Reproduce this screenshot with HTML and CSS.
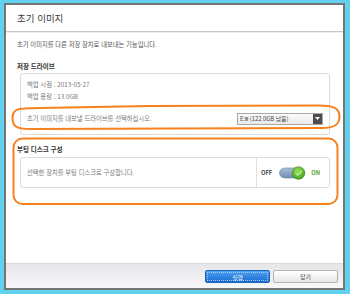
FILE: index.html
```html
<!DOCTYPE html>
<html lang="ko">
<head>
<meta charset="utf-8">
<link rel="stylesheet" href="styles.css">
</head>
<body>
<div class="dialog">
  <div class="header">초기 이미지</div>
  <div class="content">
    <p class="intro">초기 이미지를 다른 저장 장치로 내보내는 기능입니다.</p>
    <h2 class="heading">저장 드라이브</h2>
    <div class="box box-drive">
      <div class="info">백업 시점 : 2013-05-27</div>
      <div class="info">백업 용량 : 13.0GB</div>
      <div class="select-row">
        <span class="info">초기 이미지를 내보낼 드라이브를 선택하십시오.</span>
        <div class="select">
          <span class="select-text">E:₩ (122.0GB 남음)</span>
          <span class="select-arrow"><svg width="5" height="3" viewBox="0 0 5 3"><path d="M0 0H5L2.5 3Z" fill="#fff"/></svg></span>
        </div>
      </div>
    </div>
    <h2 class="heading heading-boot">부팅 디스크 구성</h2>
    <div class="box box-boot">
      <div class="boot-text info">선택한 장치를 부팅 디스크로 구성합니다.</div>
      <div class="boot-toggle">
        <span class="off">OFF</span>
        <svg class="toggle" width="27" height="14" viewBox="0 0 27 14">
          <defs>
            <linearGradient id="trk" x1="0" y1="0" x2="0" y2="1">
              <stop offset="0" stop-color="#a6c0d6"/>
              <stop offset="1" stop-color="#6d8fae"/>
            </linearGradient>
            <radialGradient id="knb" cx="0.45" cy="0.35" r="0.7">
              <stop offset="0" stop-color="#9be05e"/>
              <stop offset="1" stop-color="#3f9e1a"/>
            </radialGradient>
          </defs>
          <rect x="0.5" y="2" width="25" height="10" rx="5" fill="url(#trk)" stroke="#6a88a3" stroke-width="0.6"/>
          <circle cx="19.5" cy="7" r="6.3" fill="url(#knb)" stroke="#3a8a1a" stroke-width="0.6"/>
          <path d="M16.6 7.2L18.8 9.2L22.5 5.2" fill="none" stroke="#c9f0a6" stroke-width="1.1" stroke-linecap="round" stroke-linejoin="round"/>
        </svg>
        <span class="on">ON</span>
      </div>
    </div>
  </div>
  <div class="footer">
    <button class="btn btn-primary"><span class="focus">실행</span></button>
    <button class="btn btn-close">닫기</button>
  </div>
</div>
<svg class="annotations" width="350" height="294" viewBox="0 0 350 294">
  <path d="M24 108.5 C15 108.5 12.5 112 12.5 118 C12.5 126 16 129 30 129 L322 128 C334 128 339.5 125 339.5 117 C339.5 108 334 105.5 318 105.5 L150 106 L40 108 Z" fill="none" stroke="#f7801f" stroke-width="2"/>
  <rect x="13.5" y="138.5" width="324" height="65.5" rx="9" fill="none" stroke="#f7801f" stroke-width="2"/>
</svg>
</body>
</html>
```
FILE: styles.css
```css
* { box-sizing: border-box; }
html, body { margin: 0; }
body {
  width: 350px;
  height: 294px;
  background: #62d1ee;
  padding: 3px 5px 4px 4px;
  position: relative;
  font-family: "Noto Sans CJK KR", "Noto Sans", sans-serif;
  overflow: hidden;
}
.dialog {
  width: 341px;
  height: 287px;
  border: 2px solid #727676;
  border-top-width: 2px;
  background: #fff;
  display: flex;
  flex-direction: column;
}
.header {
  height: 27px;
  padding-left: 11px;
  display: flex;
  align-items: center;
  font-size: 9.5px;
  color: #3a3a3a;
  border-bottom: 1px solid #c8c8c8;
  box-shadow: 0 1px 0 #eee;
}
.content {
  padding: 8px 13px 0 11px;
  display: flex;
  flex-direction: column;
}
.intro {
  margin: 0;
  font-size: 6.3px;
  line-height: 10px;
  height: 10px;
  color: #555;
}
.heading {
  margin: 11px 0 0;
  font-size: 6.5px;
  line-height: 10px;
  height: 10px;
  font-weight: bold;
  color: #333;
}
.heading-boot { margin-top: 9px; }
.box {
  margin-left: 3px;
  border: 1px solid #dcdcdc;
  border-radius: 3px;
  background: #fff;
}
.box-drive {
  margin-top: 2px;
  padding: 6px 6px 9px 6px;
  display: flex;
  flex-direction: column;
  gap: 2px;
}
.info {
  font-size: 6.3px;
  line-height: 10px;
  color: #7a7a7a;
}
.select-row {
  margin-top: 8px;
  display: flex;
  align-items: center;
  justify-content: space-between;
  height: 13px;
}
.select {
  width: 86px;
  height: 12px;
  border: 1px solid #a9a9a9;
  background: linear-gradient(#fbfbfb, #e9e9e9);
  display: flex;
  align-items: stretch;
}
.select-text {
  flex: 1;
  font-size: 5.8px;
  line-height: 10px;
  padding-left: 2px;
  color: #444;
  white-space: nowrap;
  overflow: hidden;
}
.select-arrow {
  width: 9px;
  background: #4d4d4d;
  display: flex;
  align-items: center;
  justify-content: center;
}
.box-boot {
  margin-top: 3px;
  height: 31px;
  display: flex;
}
.boot-text {
  flex: 1;
  display: flex;
  align-items: center;
  padding-left: 6px;
}
.boot-toggle {
  width: 73px;
  border-left: 1px solid #e0e0e0;
  display: flex;
  align-items: center;
  padding-left: 4px;
}
.off {
  font-size: 5.8px;
  font-weight: bold;
  color: #444;
}
.toggle { margin-left: 7px; }
.on {
  margin-left: 5px;
  font-size: 5.8px;
  font-weight: bold;
  color: #5aa12a;
}
.footer {
  margin-top: auto;
  height: 25px;
  border-top: 1px solid #d9d9d9;
  background: linear-gradient(#e6e6e9, #f8f8fa);
  display: flex;
  justify-content: flex-end;
  align-items: center;
  gap: 3px;
  padding-right: 5px;
  padding-top: 1px;
}
.btn {
  width: 65px;
  height: 13px;
  padding: 0;
  border-radius: 2px;
  font-family: inherit;
  font-size: 5.8px;
  line-height: 11px;
}
.btn-primary {
  border: 1px solid #1f63b8;
  background: linear-gradient(#4ea2f2, #1a6dd2);
  color: #fff;
  padding: 1px;
}
.focus {
  display: block;
  height: 100%;
  border: 1px dotted #9ccaf6;
  line-height: 9px;
}
.btn-close {
  border: 1px solid #b3b3b3;
  background: linear-gradient(#ffffff, #e6e6e6);
  color: #444;
}
.annotations {
  position: absolute;
  left: 0;
  top: 0;
  pointer-events: none;
}
```
